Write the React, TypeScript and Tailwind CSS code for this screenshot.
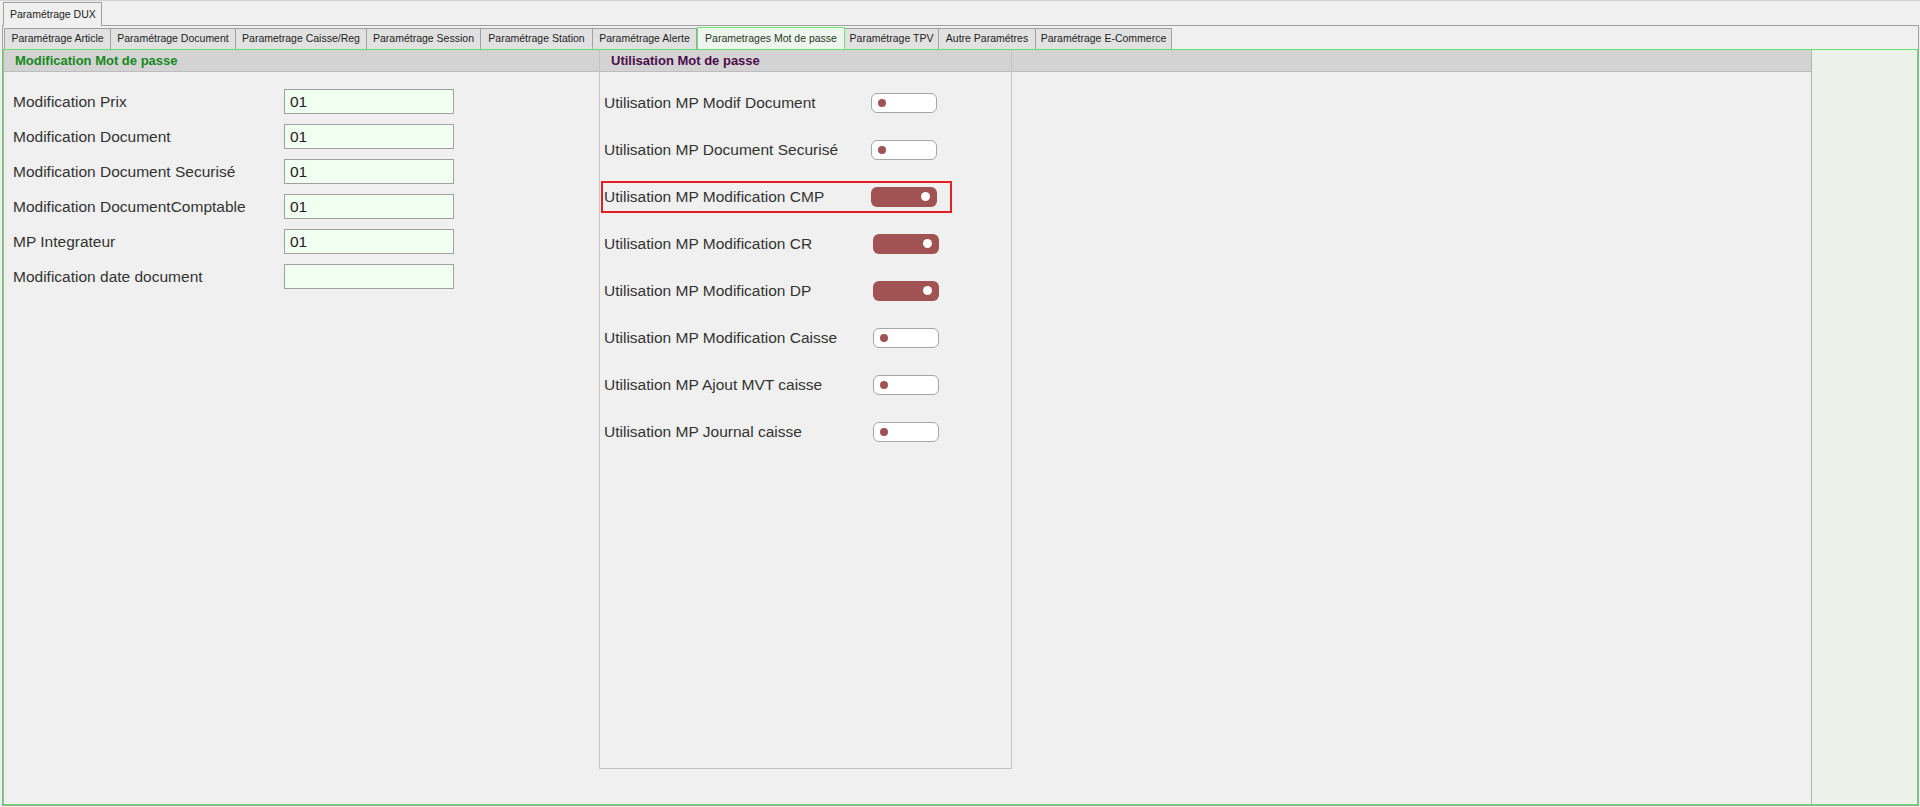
import React from "react";

const tabs = [
  { label: "Paramétrage Article", w: "w-[107px] border-l" },
  { label: "Paramétrage Document", w: "w-[125px]" },
  { label: "Parametrage Caisse/Reg", w: "w-[131px]" },
  { label: "Paramétrage Session", w: "w-[114px]" },
  { label: "Paramétrage Station", w: "w-[112px]" },
  { label: "Paramétrage Alerte", w: "w-[104px]" },
  { label: "Parametrages Mot de passe", w: "w-[148px]", active: true },
  { label: "Paramétrage TPV", w: "w-[94px]" },
  { label: "Autre Paramétres", w: "w-[97px]" },
  { label: "Paramétrage E-Commerce", w: "w-[136px]" },
];

const fields = [
  { label: "Modification Prix", value: "01" },
  { label: "Modification Document", value: "01" },
  { label: "Modification Document Securisé", value: "01" },
  { label: "Modification DocumentComptable", value: "01" },
  { label: "MP Integrateur", value: "01" },
  { label: "Modification date document", value: "" },
];

const switches = [
  { label: "Utilisation MP Modif Document", on: false, w: "w-[267px]" },
  { label: "Utilisation MP Document Securisé", on: false, w: "w-[267px]" },
  { label: "Utilisation MP Modification CMP", on: true, w: "w-[267px]", marked: true },
  { label: "Utilisation MP Modification CR", on: true, w: "w-[269px]" },
  { label: "Utilisation MP Modification DP", on: true, w: "w-[269px]" },
  { label: "Utilisation MP Modification Caisse", on: false, w: "w-[269px]" },
  { label: "Utilisation MP Ajout MVT caisse", on: false, w: "w-[269px]" },
  { label: "Utilisation MP Journal caisse", on: false, w: "w-[269px]" },
];

function Toggle({ on }: { on: boolean }) {
  if (on) {
    return (
      <div className="flex h-[20px] w-[66px] items-center justify-end rounded-[6px] bg-[#a15252] pr-[7px]">
        <span className="h-[9px] w-[9px] rounded-full bg-white" />
      </div>
    );
  }
  return (
    <div className="flex h-[20px] w-[66px] items-center rounded-[6px] border border-[#a6a6a6] bg-white pl-[6px]">
      <span className="h-[8px] w-[8px] rounded-full bg-[#a15252]" />
    </div>
  );
}

export default function App() {
  return (
    <div className="h-[807px] w-[1920px] overflow-hidden border-t border-[#d2d2d2] bg-[#f0f0f0] font-['Liberation_Sans',Arial,sans-serif] text-[#333]">
      {/* top level tab */}
      <div className="flex h-[24px] items-end pl-[3px]">
        <div className="relative z-10 -mb-px flex h-[24px] w-[99px] items-center border-l border-r border-t border-[#a0a0a0] bg-[#f0f0f0] pl-[6px] text-[10.5px] whitespace-nowrap text-[#222]">
          Paramétrage DUX
        </div>
      </div>

      <div className="ml-[2px] h-[781px] w-[1917px] border border-[#a0a0a0]">
        {/* second tab row */}
        <div className="flex h-[23px] items-end pl-px">
          {tabs.map((t) =>
            t.active ? (
              <div
                key={t.label}
                className={`flex h-[22px] items-center justify-center whitespace-nowrap border-l border-r border-t border-[#6ee66e] bg-[#eef5ee] text-[10.5px] text-[#263826] ${t.w}`}
              >
                {t.label}
              </div>
            ) : (
              <div
                key={t.label}
                className={`flex h-[21px] items-center justify-center whitespace-nowrap border-r border-t border-[#a0a0a0] bg-[#e1e1e1] text-[10.5px] text-[#222] ${t.w}`}
              >
                {t.label}
              </div>
            )
          )}
        </div>

        {/* green framed page */}
        <div className="flex h-[756px] border border-[#66e066]">
          <div className="flex flex-1">
            {/* left column */}
            <div className="w-[595px]">
              <div className="flex h-[22px] items-center border-b border-[#bdbdbd] bg-[#d3d3d3] pl-[11px] text-[13px] font-bold text-[#15891a]">
                Modification Mot de passe
              </div>
              <div className="flex flex-col gap-[10px] pl-[9px] pt-[17px]">
                {fields.map((f) => (
                  <div key={f.label} className="flex h-[25px] items-center">
                    <span className="w-[271px] text-[15.5px] whitespace-nowrap">{f.label}</span>
                    <div className="flex h-[25px] w-[170px] items-center border border-[#a0a0a0] bg-[#f0fff0] pl-[5px] pt-px text-[15.5px] text-[#222]">
                      {f.value}
                    </div>
                  </div>
                ))}
              </div>
            </div>

            {/* middle column */}
            <div className="flex h-[719px] w-[413px] flex-col border-b border-l border-r border-[#c4c4c4]">
              <div className="flex h-[22px] items-center border-b border-[#bdbdbd] bg-[#d3d3d3] pl-[11px] text-[13px] font-bold text-[#4c0c4c]">
                Utilisation Mot de passe
              </div>
              <div className="flex flex-col pl-[4px] pt-[7px]">
                {switches.map((s) => (
                  <div key={s.label} className="relative flex h-[47px] items-center">
                    <span className={`text-[15.5px] whitespace-nowrap ${s.w}`}>{s.label}</span>
                    <Toggle on={s.on} />
                    {s.marked && (
                      <div className="absolute left-[-3px] top-[8px] h-[32px] w-[351px] border-2 border-[#e31e24]" />
                    )}
                  </div>
                ))}
              </div>
            </div>

            {/* right empty column */}
            <div className="flex-1">
              <div className="h-[22px] border-b border-[#bdbdbd] bg-[#d3d3d3]" />
            </div>
          </div>

          {/* side panel */}
          <div className="w-[106px] border-l border-[#b4b4b4] bg-[#ecf1ea]" />
        </div>
      </div>
    </div>
  );
}
